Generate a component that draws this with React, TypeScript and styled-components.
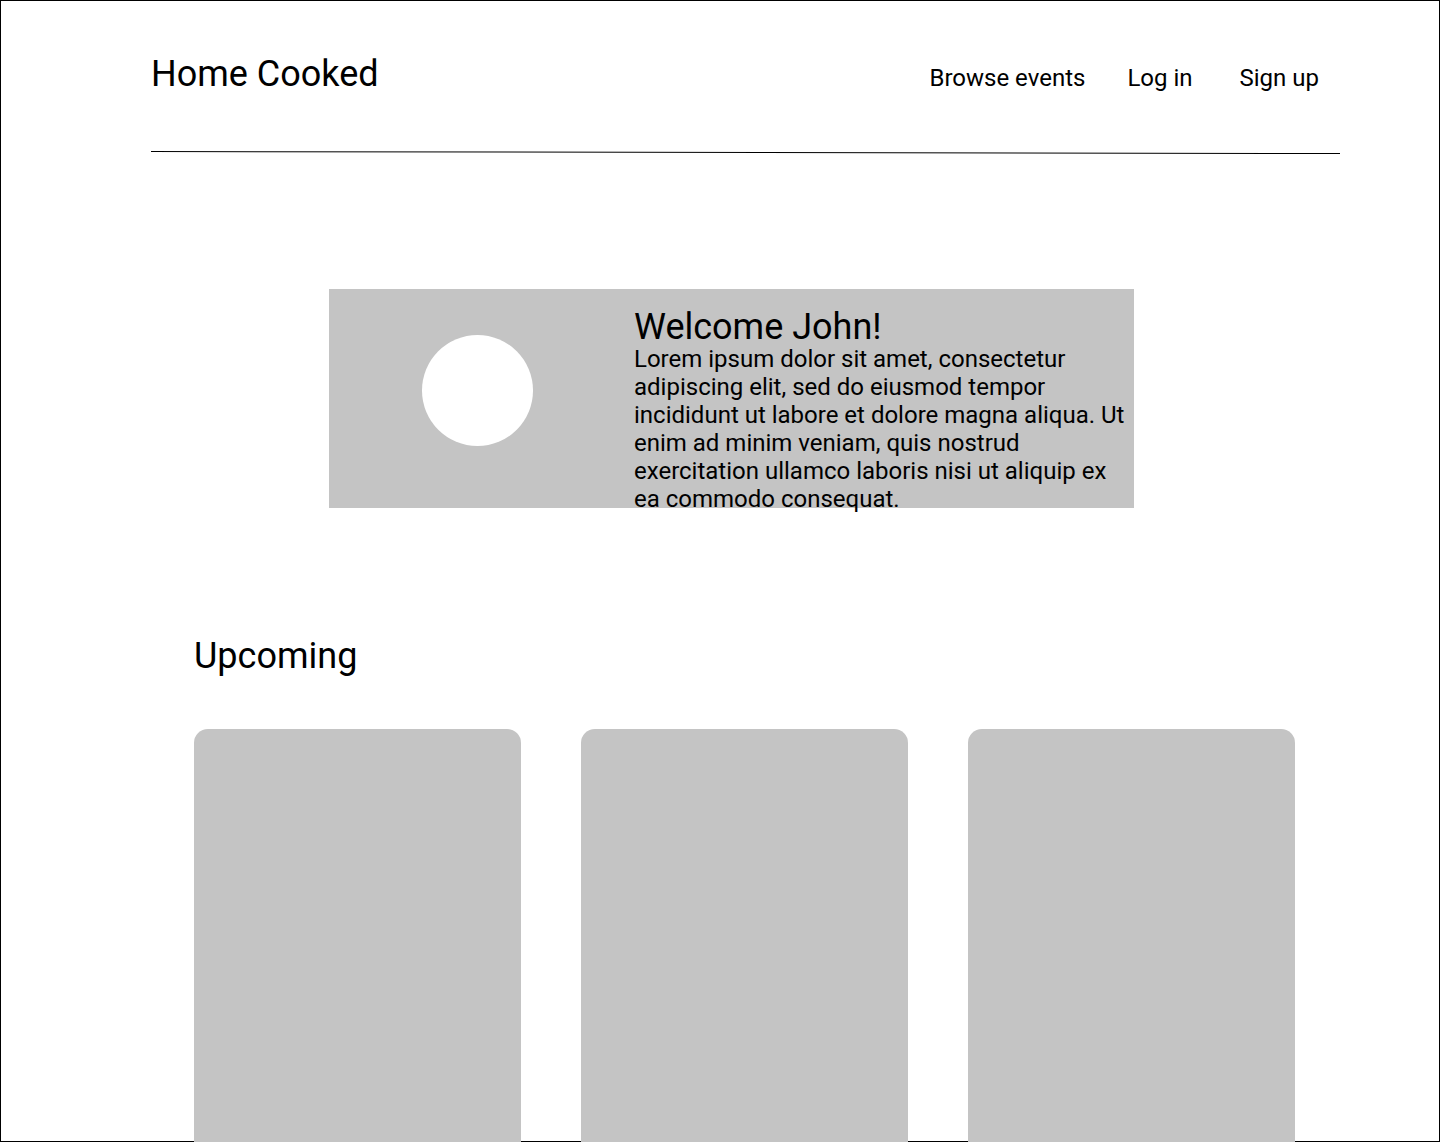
import styled, { createGlobalStyle } from "styled-components"

const GlobalStyle = createGlobalStyle`
  * {
    box-sizing: border-box;
  }

  body {
    margin: 0;
    background: #ffffff;
    font-family: Roboto, "Liberation Sans", sans-serif;
    color: #000000;
  }
`

// 메뉴 항목과 앞 항목과의 간격
const navItems = [
  { label: "Browse events", space: 0 },
  { label: "Log in", space: 42 },
  { label: "Sign up", space: 47 },
]
const upcoming = [1, 2, 3]

const App = () => {
  return (
    <>
      <GlobalStyle />
      <Frame>
        <Header>
          <HeaderRow>
            <Logo>Home Cooked</Logo>
            <Nav>
              {navItems.map((item) => (
                <NavLink key={item.label} $space={item.space}>
                  {item.label}
                </NavLink>
              ))}
            </Nav>
          </HeaderRow>
          <Divider />
        </Header>

        <Hero>
          <Avatar />
          <HeroText>
            <HeroTitle>Welcome John!</HeroTitle>
            <HeroBody>
              Lorem ipsum dolor sit amet, consectetur adipiscing elit, sed do
              eiusmod tempor incididunt ut labore et dolore magna aliqua. Ut
              enim ad minim veniam, quis nostrud exercitation ullamco laboris
              nisi ut aliquip ex ea commodo consequat.
            </HeroBody>
          </HeroText>
        </Hero>

        <Section>
          <SectionTitle>Upcoming</SectionTitle>
          <CardRow>
            {upcoming.map((id) => (
              <EventCard key={id} />
            ))}
          </CardRow>
        </Section>
      </Frame>
    </>
  )
}
export default App

const Frame = styled.div`
  // size
  width: 1440px;
  height: 1142px;

  // border
  border: 1px solid #000000;

  // padding
  padding-top: 52px;
`

const Header = styled.header`
  width: 1189px;
  margin-left: 150px;
`

const HeaderRow = styled.div`
  display: flex;
  align-items: baseline;
  justify-content: space-between;
  padding-right: 21px;
`

const Logo = styled.div`
  font-size: 36px;
  line-height: 42px;
`

const Nav = styled.nav`
  display: flex;
  align-items: baseline;
`

const NavLink = styled.a<{ $space: number }>`
  margin-left: ${(p) => p.$space}px;
  font-size: 24px;
  color: #000000;
  text-decoration: none;
  cursor: pointer;
`

const Divider = styled.div`
  margin-top: 57px;
  height: 1px;
  background: #000000;
  transform: rotate(0.1deg);
`

// 회색 환영 배너
const Hero = styled.section`
  display: flex;
  align-items: flex-start;
  width: 805px;
  height: 219px;
  margin: 136px 0 0 328px;
  background: #c4c4c4;
`

const Avatar = styled.div`
  flex-shrink: 0;
  width: 111px;
  height: 111px;
  margin: 46px 0 0 93px;
  border-radius: 50%;
  background: #ffffff;
`

const HeroText = styled.div`
  width: 500px;
  margin: 20px 0 0 101px;
`

const HeroTitle = styled.h1`
  margin: 0;
  font-size: 36px;
  font-weight: 400;
  line-height: 36px;
`

const HeroBody = styled.p`
  margin: 0;
  font-size: 24px;
  line-height: 28px;
`

const Section = styled.section`
  margin: 127px 0 0 193px;
`

const SectionTitle = styled.h2`
  margin: 0;
  font-size: 36px;
  font-weight: 400;
  line-height: 42px;
`

const CardRow = styled.div`
  display: flex;
  gap: 60px;
  margin-top: 52px;
`

const EventCard = styled.div`
  width: 327px;
  height: 440px;
  border-radius: 14px;
  background: #c4c4c4;
`
